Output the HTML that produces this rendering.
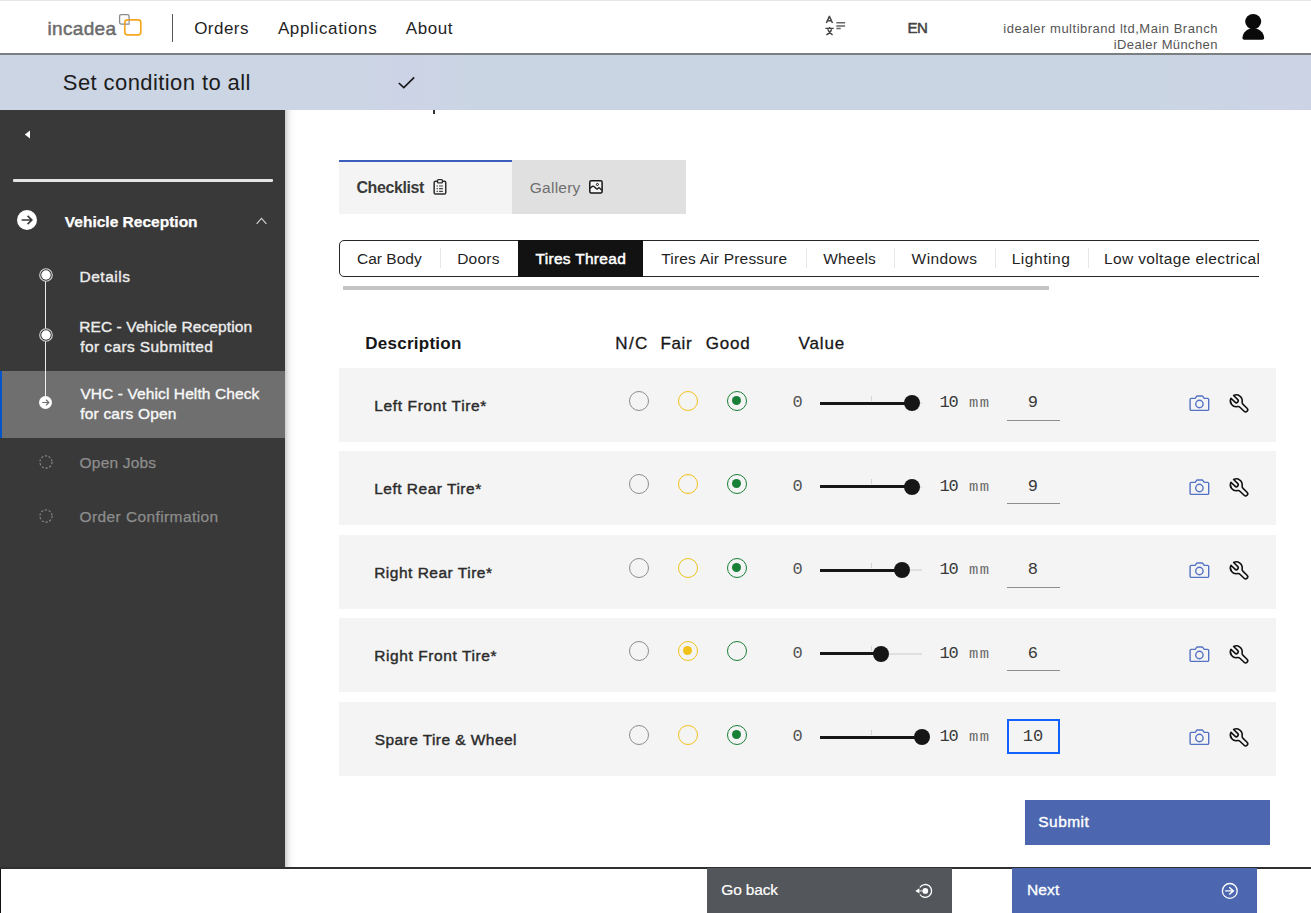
<!DOCTYPE html>
<html><head><meta charset="utf-8"><title>Vehicle Health Check</title>
<style>
*{box-sizing:border-box;margin:0;padding:0}
html,body{width:1311px;height:913px;overflow:hidden;background:#fff}
body{font-family:"Liberation Sans",sans-serif;color:#161616;position:relative}
.a{position:absolute}
.t{position:absolute;white-space:nowrap}
svg{position:absolute;overflow:visible}
.row{position:absolute;left:339px;width:937px;background:#f4f4f4}
.rad{position:absolute;width:20px;height:20px;border-radius:50%;border:1.3px solid #8d8d8d}
.rad i{position:absolute;left:4.2px;top:4.2px;width:9px;height:9px;border-radius:50%}
</style></head><body>
<div class="a" style="left:0;top:0;width:1311px;height:55px;background:#fff;border-top:1px solid #e6e6e6;border-bottom:2px solid #7b7f80"></div>
<div class="t" style="left:47.40px;top:18.90px;font-size:19px;line-height:20px;font-weight:400;color:#6c6c6c;letter-spacing:0.354px;font-family:'Liberation Sans',sans-serif;-webkit-text-stroke:0.5px #6c6c6c;">incadea</div>
<svg style="left:118px;top:13px" width="26" height="26" viewBox="0 0 26 26" fill="none"><rect x="1.6" y="1.6" width="9.5" height="9.5" rx="1.6" stroke="#8a8a8a" stroke-width="1.3"/><rect x="6.8" y="6.8" width="16" height="15" rx="2.6" fill="#fff" stroke="#f6a823" stroke-width="1.7"/><path d="M6.8 11.1 H11.1 V6.8" stroke="#8a8a8a" stroke-width="1.1"/></svg>
<div class="a" style="left:171.5px;top:14px;width:1.5px;height:28px;background:#555"></div>
<div class="t" style="left:194.15px;top:19.21px;font-size:17px;line-height:20px;font-weight:400;color:#1f1f1f;letter-spacing:0.475px;font-family:'Liberation Sans',sans-serif;">Orders</div>
<div class="t" style="left:277.90px;top:19.21px;font-size:17px;line-height:20px;font-weight:400;color:#1f1f1f;letter-spacing:0.645px;font-family:'Liberation Sans',sans-serif;">Applications</div>
<div class="t" style="left:405.80px;top:19.21px;font-size:17px;line-height:20px;font-weight:400;color:#1f1f1f;letter-spacing:0.556px;font-family:'Liberation Sans',sans-serif;">About</div>
<svg style="left:820px;top:10px" width="32" height="30" viewBox="0 0 32 30" fill="none" stroke="#454545" stroke-width="1.5" stroke-linejoin="round"><path d="M6.3 13 L9.4 6.4 L12.5 13 M7.5 10.8 H11.3"/><path d="M5.4 18.4 H13.7 M9.5 16.9 V18.4 M7.7 19.2 C8.6 22 10.4 23.8 12.6 24.9 M11.6 19.2 C10.7 22 8.8 23.8 6.4 24.9" stroke-width="1.4"/><path d="M16.3 12.65 H25.1 M16.3 15.9 H25.1 M16.4 18.6 H20.7" stroke-width="1.5" stroke="#666"/></svg>
<div class="t" style="left:907.40px;top:18.01px;font-size:15px;line-height:20px;font-weight:400;color:#444;letter-spacing:-0.275px;font-family:'Liberation Sans',sans-serif;-webkit-text-stroke:0.5px #444;">EN</div>
<div class="t" style="left:1003.33px;top:18.90px;font-size:13px;line-height:20px;font-weight:400;color:#555;letter-spacing:0.509px;font-family:'Liberation Sans',sans-serif;">idealer multibrand ltd,Main Branch</div>
<div class="t" style="left:1113.83px;top:34.50px;font-size:13px;line-height:20px;font-weight:400;color:#555;letter-spacing:0.379px;font-family:'Liberation Sans',sans-serif;">iDealer München</div>
<svg style="left:1241px;top:12px" width="26" height="30" viewBox="0 0 26 30"><ellipse cx="12.2" cy="9.6" rx="8" ry="7.7" fill="#0a0a0a"/><path d="M3.4 27.8 C2 27.8 1.4 27 1.5 25.6 C2 20 6.4 16.6 12.2 16.6 C18.2 16.6 22.6 20 23.1 25.6 C23.2 27 22.6 27.8 21.2 27.8 Z" fill="#0a0a0a"/></svg>
<div class="a" style="left:0;top:55px;width:1311px;height:55px;background:linear-gradient(to right,#cbd5e4 0,#cbd5e4 28%,#cdd3e6 31%,#cad5e3 36%,#cad5e3 88%,#ccd3e5 100%)"></div>
<div class="t" style="left:62.80px;top:72.70px;font-size:22px;line-height:20px;font-weight:400;color:#1c1c1c;letter-spacing:0.412px;font-family:'Liberation Sans',sans-serif;">Set condition to all</div>
<svg style="left:397px;top:75px" width="20" height="16" viewBox="0 0 20 16" fill="none" stroke="#161616" stroke-width="1.6"><path d="M1.8 8 L6.8 12.6 L17.2 2.4"/></svg>
<div class="a" style="left:0;top:110px;width:285px;height:758px;background:#393939"></div>
<div class="a" style="left:285px;top:110px;width:11px;height:758px;background:linear-gradient(to right,rgba(0,0,0,.2),rgba(0,0,0,.08) 30%,rgba(0,0,0,.02) 60%,rgba(0,0,0,0))"></div>
<div class="a" style="left:433px;top:110px;width:1.5px;height:3.5px;background:#333"></div>
<svg style="left:24px;top:130px" width="8" height="10" viewBox="0 0 8 10"><path d="M6 0.6 V8.6 L0.8 4.6 Z" fill="#fff"/></svg>
<div class="a" style="left:13px;top:179.3px;width:259.5px;height:2.4px;background:#e4e4e4;border-radius:1px"></div>
<svg style="left:16.7px;top:210.3px" width="20" height="20" viewBox="0 0 20 20"><circle cx="10" cy="10" r="10" fill="#fff"/><path d="M4.6 10 H14.6 M10.6 5.8 L14.8 10 L10.6 14.2" fill="none" stroke="#393939" stroke-width="1.7"/></svg>
<div class="t" style="left:64.80px;top:212.00px;font-size:15.5px;line-height:20px;font-weight:700;color:#fff;letter-spacing:0.008px;font-family:'Liberation Sans',sans-serif;-webkit-text-stroke:0.25px #fff;">Vehicle Reception</div>
<svg style="left:256px;top:216.5px" width="11" height="8" viewBox="0 0 11 8" fill="none" stroke="#d0d0d0" stroke-width="1.2"><path d="M0.6 6.8 L5.5 1.4 L10.4 6.8"/></svg>
<div class="a" style="left:45.1px;top:275px;width:1.4px;height:127px;background:#e8e8e8"></div>
<svg style="left:38.8px;top:267.8px" width="14" height="14" viewBox="0 0 14 14"><circle cx="7" cy="7" r="6.3" fill="#393939" stroke="#d6d6d6" stroke-width="1.1"/><circle cx="7" cy="7" r="4.7" fill="#fff"/></svg>
<div class="t" style="left:79.44px;top:266.91px;font-size:15.5px;line-height:20px;font-weight:400;color:#ececec;letter-spacing:0.532px;font-family:'Liberation Sans',sans-serif;-webkit-text-stroke:0.38px #ececec;">Details</div>
<svg style="left:38.8px;top:328px" width="14" height="14" viewBox="0 0 14 14"><circle cx="7" cy="7" r="6.3" fill="#393939" stroke="#d6d6d6" stroke-width="1.1"/><circle cx="7" cy="7" r="4.7" fill="#fff"/></svg>
<div class="t" style="left:79.14px;top:317.00px;font-size:15.5px;line-height:20px;font-weight:400;color:#ececec;letter-spacing:0.111px;font-family:'Liberation Sans',sans-serif;-webkit-text-stroke:0.38px #ececec;">REC - Vehicle Reception</div>
<div class="t" style="left:80.27px;top:336.81px;font-size:15.5px;line-height:20px;font-weight:400;color:#ececec;letter-spacing:0.400px;font-family:'Liberation Sans',sans-serif;-webkit-text-stroke:0.38px #ececec;">for cars Submitted</div>
<div class="a" style="left:0;top:371px;width:285px;height:66.5px;background:#6f6f6f"></div>
<div class="a" style="left:0;top:371px;width:2.2px;height:66.5px;background:#0353c9"></div>
<div class="a" style="left:45.1px;top:371px;width:1.4px;height:25px;background:#f0f0f0"></div>
<svg style="left:39.2px;top:395.5px" width="13" height="13" viewBox="0 0 13 13"><circle cx="6.5" cy="6.5" r="6.5" fill="#fff"/><path d="M3.2 6.5 H9.6 M7 3.8 L9.8 6.5 L7 9.2" fill="none" stroke="#6f6f6f" stroke-width="1.2"/></svg>
<div class="t" style="left:80.39px;top:383.91px;font-size:15.5px;line-height:20px;font-weight:400;color:#f8f8f8;letter-spacing:0.100px;font-family:'Liberation Sans',sans-serif;-webkit-text-stroke:0.38px #f8f8f8;">VHC - Vehicl Helth Check</div>
<div class="t" style="left:80.27px;top:403.61px;font-size:15.5px;line-height:20px;font-weight:400;color:#f8f8f8;letter-spacing:0.189px;font-family:'Liberation Sans',sans-serif;-webkit-text-stroke:0.38px #f8f8f8;">for cars Open</div>
<svg style="left:38.8px;top:455.2px" width="14" height="14" viewBox="0 0 14 14"><circle cx="7" cy="7" r="6.1" fill="none" stroke="#8a8a8a" stroke-width="1.1" stroke-dasharray="2.2 1.63"/></svg>
<div class="t" style="left:79.58px;top:453.31px;font-size:15.5px;line-height:20px;font-weight:400;color:#8d8d8d;letter-spacing:0.187px;font-family:'Liberation Sans',sans-serif;-webkit-text-stroke:0.25px #8d8d8d;">Open Jobs</div>
<svg style="left:38.8px;top:508.6px" width="14" height="14" viewBox="0 0 14 14"><circle cx="7" cy="7" r="6.1" fill="none" stroke="#8a8a8a" stroke-width="1.1" stroke-dasharray="2.2 1.63"/></svg>
<div class="t" style="left:79.58px;top:507.20px;font-size:15.5px;line-height:20px;font-weight:400;color:#8d8d8d;letter-spacing:0.397px;font-family:'Liberation Sans',sans-serif;-webkit-text-stroke:0.25px #8d8d8d;">Order Confirmation</div>
<div class="a" style="left:339px;top:160px;width:173px;height:53.5px;background:#f4f4f4;border-top:2px solid #3d5dbd"></div>
<div class="a" style="left:512px;top:160px;width:174px;height:53.5px;background:#e0e0e0"></div>
<div class="t" style="left:356.38px;top:177.70px;font-size:16px;line-height:20px;font-weight:700;color:#3a3a3a;letter-spacing:-0.384px;font-family:'Liberation Sans',sans-serif;">Checklist</div>
<svg style="left:426px;top:172px" width="30" height="30" viewBox="0 0 30 30" fill="none" stroke="#2e2e2e" stroke-width="1.5"><rect x="8.15" y="9.2" width="11.6" height="12.85" rx="1.4"/><rect x="11.5" y="7.6" width="4.9" height="3.3" rx="0.9" fill="#fafafa" stroke-width="1.4"/><path d="M10.6 14 H11.9 M13.1 14 H16.9 M10.6 16.6 H11.9 M13.1 16.6 H16.9 M10.6 19.4 H11.9 M13.1 19.4 H16.9" stroke-width="1.2" stroke="#444"/></svg>
<div class="t" style="left:529.85px;top:177.91px;font-size:15.5px;line-height:20px;font-weight:400;color:#6f6f6f;letter-spacing:0.221px;font-family:'Liberation Sans',sans-serif;">Gallery</div>
<svg style="left:581px;top:172px" width="30" height="30" viewBox="0 0 30 30" fill="none" stroke="#161616" stroke-width="1.5" stroke-linejoin="round"><rect x="8.8" y="8.65" width="12.3" height="12.45" rx="1.5" fill="#f4f4f4"/><circle cx="16.4" cy="12.5" r="1.05" stroke-width="1"/><path d="M8.9 16.2 L11.4 14.4 Q12.2 13.8 13 14.5 L15.4 16.8 Q16 17.3 16.6 16.7 L17.5 15.9 Q18 15.5 18.5 16 L20.9 18.4" stroke-width="1.3"/></svg>
<div class="a" style="left:339px;top:240px;width:920.2px;height:37px;overflow:hidden"><div class="a" style="left:0;top:0;width:960px;height:37px;border:1.3px solid #262626;border-radius:5px;background:#fff"></div></div>
<div class="a" style="left:518px;top:240px;width:124.5px;height:37px;background:#121212"></div>
<div class="a" style="left:440px;top:248px;width:1px;height:20px;background:#e6e6e6"></div>
<div class="a" style="left:806px;top:248px;width:1px;height:20px;background:#e6e6e6"></div>
<div class="a" style="left:894px;top:248px;width:1px;height:20px;background:#e6e6e6"></div>
<div class="a" style="left:995px;top:248px;width:1px;height:20px;background:#e6e6e6"></div>
<div class="a" style="left:1087.5px;top:248px;width:1px;height:20px;background:#e6e6e6"></div>
<div class="t" style="left:356.95px;top:249.20px;font-size:15.5px;line-height:20px;font-weight:400;color:#1f1f1f;letter-spacing:0.032px;font-family:'Liberation Sans',sans-serif;">Car Body</div>
<div class="t" style="left:457.15px;top:249.20px;font-size:15.5px;line-height:20px;font-weight:400;color:#1f1f1f;letter-spacing:0.244px;font-family:'Liberation Sans',sans-serif;">Doors</div>
<div class="t" style="left:535.58px;top:249.20px;font-size:15.5px;line-height:20px;font-weight:400;color:#fff;letter-spacing:0.289px;font-family:'Liberation Sans',sans-serif;-webkit-text-stroke:0.5px #fff;">Tires Thread</div>
<div class="t" style="left:661.23px;top:249.20px;font-size:15.5px;line-height:20px;font-weight:400;color:#1f1f1f;letter-spacing:0.193px;font-family:'Liberation Sans',sans-serif;">Tires Air Pressure</div>
<div class="t" style="left:823.30px;top:249.20px;font-size:15.5px;line-height:20px;font-weight:400;color:#1f1f1f;letter-spacing:0.155px;font-family:'Liberation Sans',sans-serif;">Wheels</div>
<div class="t" style="left:911.60px;top:249.20px;font-size:15.5px;line-height:20px;font-weight:400;color:#1f1f1f;letter-spacing:0.404px;font-family:'Liberation Sans',sans-serif;">Windows</div>
<div class="t" style="left:1011.65px;top:249.20px;font-size:15.5px;line-height:20px;font-weight:400;color:#1f1f1f;letter-spacing:0.557px;font-family:'Liberation Sans',sans-serif;">Lighting</div>
<div class="t" style="left:1103.95px;top:249.20px;font-size:15.5px;line-height:20px;font-weight:400;color:#1f1f1f;letter-spacing:0.376px;font-family:'Liberation Sans',sans-serif;">Low voltage electrical</div>
<div class="a" style="left:1259.2px;top:238px;width:52px;height:42px;background:#fff"></div>
<div class="a" style="left:343px;top:286.2px;width:705.5px;height:3.6px;background:#c4c4c4"></div>
<div class="t" style="left:365.18px;top:333.61px;font-size:17px;line-height:20px;font-weight:700;color:#161616;letter-spacing:0.272px;font-family:'Liberation Sans',sans-serif;">Description</div>
<div class="t" style="left:615.27px;top:333.61px;font-size:17px;line-height:20px;font-weight:400;color:#161616;letter-spacing:1.425px;font-family:'Liberation Sans',sans-serif;-webkit-text-stroke:0.3px #161616;">N/C</div>
<div class="t" style="left:660.57px;top:333.61px;font-size:17px;line-height:20px;font-weight:400;color:#161616;letter-spacing:0.592px;font-family:'Liberation Sans',sans-serif;-webkit-text-stroke:0.3px #161616;">Fair</div>
<div class="t" style="left:705.67px;top:333.61px;font-size:17px;line-height:20px;font-weight:400;color:#161616;letter-spacing:0.792px;font-family:'Liberation Sans',sans-serif;-webkit-text-stroke:0.3px #161616;">Good</div>
<div class="t" style="left:798.62px;top:333.61px;font-size:17px;line-height:20px;font-weight:400;color:#161616;letter-spacing:0.856px;font-family:'Liberation Sans',sans-serif;-webkit-text-stroke:0.3px #161616;">Value</div>
<div class="row" style="top:367.5px;height:74.2px"></div>
<div class="t" style="left:374.15px;top:395.50px;font-size:15.5px;line-height:20px;font-weight:400;color:#2b2b2b;letter-spacing:0.647px;font-family:'Liberation Sans',sans-serif;-webkit-text-stroke:0.4px #2b2b2b;">Left Front Tire*</div>
<div class="rad" style="left:629.1px;top:390.8px;border-color:#8d8d8d"></div>
<div class="rad" style="left:678.1px;top:390.8px;border-color:#f1c21b"></div>
<div class="rad" style="left:727.3px;top:390.8px;border-color:#198038"><i style="background:#198038"></i></div>
<div class="t" style="left:792.40px;top:393.41px;font-size:17px;line-height:20px;font-weight:400;color:#525252;letter-spacing:0.000px;font-family:'Liberation Mono',monospace;">0</div>
<div class="a" style="left:820px;top:402.2px;width:102px;height:2px;background:#e0e0e0"></div>
<div class="a" style="left:871px;top:395.7px;width:1px;height:5px;background:#d4d4d4"></div>
<div class="a" style="left:820px;top:401.8px;width:91.79999999999995px;height:2.8px;background:#161616"></div>
<div class="a" style="left:903.8px;top:395.2px;width:16px;height:16px;border-radius:50%;background:#161616"></div>
<div class="t" style="left:939.45px;top:393.41px;font-size:17px;line-height:20px;font-weight:400;color:#393939;letter-spacing:-1.050px;font-family:'Liberation Mono',monospace;">10</div>
<div class="t" style="left:969.05px;top:393.40px;font-size:15.5px;line-height:20px;font-weight:400;color:#6a6a6a;letter-spacing:1.300px;font-family:'Liberation Mono',monospace;">mm</div>
<div class="a" style="left:1007px;top:419.5px;width:53px;height:1px;background:#8d8d8d"></div>
<div class="t" style="left:1027.83px;top:393.41px;font-size:17px;line-height:20px;font-weight:400;color:#393939;letter-spacing:0.000px;font-family:'Liberation Mono',monospace;">9</div>
<svg style="left:1184px;top:390.0px" width="30" height="26" viewBox="0 0 30 26" fill="none" stroke="#5573c4" stroke-width="1.4"><path d="M7.3 8.4 H11.2 L12.4 6.6 Q12.7 6 13.4 6 H18 Q18.7 6 19 6.6 L20.2 8.4 H23.5 Q24.7 8.4 24.7 9.6 V19.2 Q24.7 20.4 23.5 20.4 H7.3 Q6.1 20.4 6.1 19.2 V9.6 Q6.1 8.4 7.3 8.4 Z" stroke-linejoin="round"/><circle cx="15.4" cy="14" r="3.7"/></svg>
<svg style="left:1224px;top:390.0px" width="30" height="26" viewBox="0 0 30 26" fill="none" stroke="#111" stroke-width="1.6" stroke-linejoin="round"><g transform="translate(12.3 10.8) rotate(44)"><path d="M-5.6 -1.9 A5.9 5.9 0 0 1 4.9 -3.3 Q5.8 -2.1 7.4 -2.1 L12.9 -2.1 A2.1 2.1 0 0 1 12.9 2.1 L7.4 2.1 Q5.8 2.1 4.9 3.3 A5.9 5.9 0 0 1 -5.6 1.9 L0 1.9 A1.9 1.9 0 0 0 0 -1.9 Z"/></g></svg>
<div class="row" style="top:451.0px;height:74.2px"></div>
<div class="t" style="left:374.15px;top:479.00px;font-size:15.5px;line-height:20px;font-weight:400;color:#2b2b2b;letter-spacing:0.509px;font-family:'Liberation Sans',sans-serif;-webkit-text-stroke:0.4px #2b2b2b;">Left Rear Tire*</div>
<div class="rad" style="left:629.1px;top:474.3px;border-color:#8d8d8d"></div>
<div class="rad" style="left:678.1px;top:474.3px;border-color:#f1c21b"></div>
<div class="rad" style="left:727.3px;top:474.3px;border-color:#198038"><i style="background:#198038"></i></div>
<div class="t" style="left:792.40px;top:476.91px;font-size:17px;line-height:20px;font-weight:400;color:#525252;letter-spacing:0.000px;font-family:'Liberation Mono',monospace;">0</div>
<div class="a" style="left:820px;top:485.7px;width:102px;height:2px;background:#e0e0e0"></div>
<div class="a" style="left:871px;top:479.2px;width:1px;height:5px;background:#d4d4d4"></div>
<div class="a" style="left:820px;top:485.3px;width:91.79999999999995px;height:2.8px;background:#161616"></div>
<div class="a" style="left:903.8px;top:478.7px;width:16px;height:16px;border-radius:50%;background:#161616"></div>
<div class="t" style="left:939.45px;top:476.91px;font-size:17px;line-height:20px;font-weight:400;color:#393939;letter-spacing:-1.050px;font-family:'Liberation Mono',monospace;">10</div>
<div class="t" style="left:969.05px;top:476.90px;font-size:15.5px;line-height:20px;font-weight:400;color:#6a6a6a;letter-spacing:1.300px;font-family:'Liberation Mono',monospace;">mm</div>
<div class="a" style="left:1007px;top:503.0px;width:53px;height:1px;background:#8d8d8d"></div>
<div class="t" style="left:1027.83px;top:476.91px;font-size:17px;line-height:20px;font-weight:400;color:#393939;letter-spacing:0.000px;font-family:'Liberation Mono',monospace;">9</div>
<svg style="left:1184px;top:473.5px" width="30" height="26" viewBox="0 0 30 26" fill="none" stroke="#5573c4" stroke-width="1.4"><path d="M7.3 8.4 H11.2 L12.4 6.6 Q12.7 6 13.4 6 H18 Q18.7 6 19 6.6 L20.2 8.4 H23.5 Q24.7 8.4 24.7 9.6 V19.2 Q24.7 20.4 23.5 20.4 H7.3 Q6.1 20.4 6.1 19.2 V9.6 Q6.1 8.4 7.3 8.4 Z" stroke-linejoin="round"/><circle cx="15.4" cy="14" r="3.7"/></svg>
<svg style="left:1224px;top:473.5px" width="30" height="26" viewBox="0 0 30 26" fill="none" stroke="#111" stroke-width="1.6" stroke-linejoin="round"><g transform="translate(12.3 10.8) rotate(44)"><path d="M-5.6 -1.9 A5.9 5.9 0 0 1 4.9 -3.3 Q5.8 -2.1 7.4 -2.1 L12.9 -2.1 A2.1 2.1 0 0 1 12.9 2.1 L7.4 2.1 Q5.8 2.1 4.9 3.3 A5.9 5.9 0 0 1 -5.6 1.9 L0 1.9 A1.9 1.9 0 0 0 0 -1.9 Z"/></g></svg>
<div class="row" style="top:534.5px;height:74.2px"></div>
<div class="t" style="left:374.15px;top:562.50px;font-size:15.5px;line-height:20px;font-weight:400;color:#2b2b2b;letter-spacing:0.503px;font-family:'Liberation Sans',sans-serif;-webkit-text-stroke:0.4px #2b2b2b;">Right Rear Tire*</div>
<div class="rad" style="left:629.1px;top:557.8px;border-color:#8d8d8d"></div>
<div class="rad" style="left:678.1px;top:557.8px;border-color:#f1c21b"></div>
<div class="rad" style="left:727.3px;top:557.8px;border-color:#198038"><i style="background:#198038"></i></div>
<div class="t" style="left:792.40px;top:560.41px;font-size:17px;line-height:20px;font-weight:400;color:#525252;letter-spacing:0.000px;font-family:'Liberation Mono',monospace;">0</div>
<div class="a" style="left:820px;top:569.2px;width:102px;height:2px;background:#e0e0e0"></div>
<div class="a" style="left:871px;top:562.7px;width:1px;height:5px;background:#d4d4d4"></div>
<div class="a" style="left:820px;top:568.8000000000001px;width:81.60000000000002px;height:2.8px;background:#161616"></div>
<div class="a" style="left:893.6px;top:562.2px;width:16px;height:16px;border-radius:50%;background:#161616"></div>
<div class="t" style="left:939.45px;top:560.41px;font-size:17px;line-height:20px;font-weight:400;color:#393939;letter-spacing:-1.050px;font-family:'Liberation Mono',monospace;">10</div>
<div class="t" style="left:969.05px;top:560.40px;font-size:15.5px;line-height:20px;font-weight:400;color:#6a6a6a;letter-spacing:1.300px;font-family:'Liberation Mono',monospace;">mm</div>
<div class="a" style="left:1007px;top:586.5px;width:53px;height:1px;background:#8d8d8d"></div>
<div class="t" style="left:1027.83px;top:560.41px;font-size:17px;line-height:20px;font-weight:400;color:#393939;letter-spacing:0.000px;font-family:'Liberation Mono',monospace;">8</div>
<svg style="left:1184px;top:557.0px" width="30" height="26" viewBox="0 0 30 26" fill="none" stroke="#5573c4" stroke-width="1.4"><path d="M7.3 8.4 H11.2 L12.4 6.6 Q12.7 6 13.4 6 H18 Q18.7 6 19 6.6 L20.2 8.4 H23.5 Q24.7 8.4 24.7 9.6 V19.2 Q24.7 20.4 23.5 20.4 H7.3 Q6.1 20.4 6.1 19.2 V9.6 Q6.1 8.4 7.3 8.4 Z" stroke-linejoin="round"/><circle cx="15.4" cy="14" r="3.7"/></svg>
<svg style="left:1224px;top:557.0px" width="30" height="26" viewBox="0 0 30 26" fill="none" stroke="#111" stroke-width="1.6" stroke-linejoin="round"><g transform="translate(12.3 10.8) rotate(44)"><path d="M-5.6 -1.9 A5.9 5.9 0 0 1 4.9 -3.3 Q5.8 -2.1 7.4 -2.1 L12.9 -2.1 A2.1 2.1 0 0 1 12.9 2.1 L7.4 2.1 Q5.8 2.1 4.9 3.3 A5.9 5.9 0 0 1 -5.6 1.9 L0 1.9 A1.9 1.9 0 0 0 0 -1.9 Z"/></g></svg>
<div class="row" style="top:618.0px;height:74.2px"></div>
<div class="t" style="left:374.15px;top:646.00px;font-size:15.5px;line-height:20px;font-weight:400;color:#2b2b2b;letter-spacing:0.595px;font-family:'Liberation Sans',sans-serif;-webkit-text-stroke:0.4px #2b2b2b;">Right Front Tire*</div>
<div class="rad" style="left:629.1px;top:641.3px;border-color:#8d8d8d"></div>
<div class="rad" style="left:678.1px;top:641.3px;border-color:#f1c21b"><i style="background:#f1c21b"></i></div>
<div class="rad" style="left:727.3px;top:641.3px;border-color:#198038"></div>
<div class="t" style="left:792.40px;top:643.91px;font-size:17px;line-height:20px;font-weight:400;color:#525252;letter-spacing:0.000px;font-family:'Liberation Mono',monospace;">0</div>
<div class="a" style="left:820px;top:652.7px;width:102px;height:2px;background:#e0e0e0"></div>
<div class="a" style="left:871px;top:646.2px;width:1px;height:5px;background:#d4d4d4"></div>
<div class="a" style="left:820px;top:652.3000000000001px;width:61.200000000000045px;height:2.8px;background:#161616"></div>
<div class="a" style="left:873.2px;top:645.7px;width:16px;height:16px;border-radius:50%;background:#161616"></div>
<div class="t" style="left:939.45px;top:643.91px;font-size:17px;line-height:20px;font-weight:400;color:#393939;letter-spacing:-1.050px;font-family:'Liberation Mono',monospace;">10</div>
<div class="t" style="left:969.05px;top:643.90px;font-size:15.5px;line-height:20px;font-weight:400;color:#6a6a6a;letter-spacing:1.300px;font-family:'Liberation Mono',monospace;">mm</div>
<div class="a" style="left:1007px;top:670.0px;width:53px;height:1px;background:#8d8d8d"></div>
<div class="t" style="left:1027.70px;top:643.91px;font-size:17px;line-height:20px;font-weight:400;color:#393939;letter-spacing:0.000px;font-family:'Liberation Mono',monospace;">6</div>
<svg style="left:1184px;top:640.5px" width="30" height="26" viewBox="0 0 30 26" fill="none" stroke="#5573c4" stroke-width="1.4"><path d="M7.3 8.4 H11.2 L12.4 6.6 Q12.7 6 13.4 6 H18 Q18.7 6 19 6.6 L20.2 8.4 H23.5 Q24.7 8.4 24.7 9.6 V19.2 Q24.7 20.4 23.5 20.4 H7.3 Q6.1 20.4 6.1 19.2 V9.6 Q6.1 8.4 7.3 8.4 Z" stroke-linejoin="round"/><circle cx="15.4" cy="14" r="3.7"/></svg>
<svg style="left:1224px;top:640.5px" width="30" height="26" viewBox="0 0 30 26" fill="none" stroke="#111" stroke-width="1.6" stroke-linejoin="round"><g transform="translate(12.3 10.8) rotate(44)"><path d="M-5.6 -1.9 A5.9 5.9 0 0 1 4.9 -3.3 Q5.8 -2.1 7.4 -2.1 L12.9 -2.1 A2.1 2.1 0 0 1 12.9 2.1 L7.4 2.1 Q5.8 2.1 4.9 3.3 A5.9 5.9 0 0 1 -5.6 1.9 L0 1.9 A1.9 1.9 0 0 0 0 -1.9 Z"/></g></svg>
<div class="row" style="top:701.5px;height:74.2px"></div>
<div class="t" style="left:374.65px;top:729.50px;font-size:15.5px;line-height:20px;font-weight:400;color:#2b2b2b;letter-spacing:0.438px;font-family:'Liberation Sans',sans-serif;-webkit-text-stroke:0.4px #2b2b2b;">Spare Tire &amp; Wheel</div>
<div class="rad" style="left:629.1px;top:724.8px;border-color:#8d8d8d"></div>
<div class="rad" style="left:678.1px;top:724.8px;border-color:#f1c21b"></div>
<div class="rad" style="left:727.3px;top:724.8px;border-color:#198038"><i style="background:#198038"></i></div>
<div class="t" style="left:792.40px;top:727.41px;font-size:17px;line-height:20px;font-weight:400;color:#525252;letter-spacing:0.000px;font-family:'Liberation Mono',monospace;">0</div>
<div class="a" style="left:820px;top:736.2px;width:102px;height:2px;background:#e0e0e0"></div>
<div class="a" style="left:871px;top:729.7px;width:1px;height:5px;background:#d4d4d4"></div>
<div class="a" style="left:820px;top:735.8000000000001px;width:102.0px;height:2.8px;background:#161616"></div>
<div class="a" style="left:914.0px;top:729.2px;width:16px;height:16px;border-radius:50%;background:#161616"></div>
<div class="t" style="left:939.45px;top:727.41px;font-size:17px;line-height:20px;font-weight:400;color:#393939;letter-spacing:-1.050px;font-family:'Liberation Mono',monospace;">10</div>
<div class="t" style="left:969.05px;top:727.40px;font-size:15.5px;line-height:20px;font-weight:400;color:#6a6a6a;letter-spacing:1.300px;font-family:'Liberation Mono',monospace;">mm</div>
<div class="a" style="left:1007px;top:719.1px;width:53px;height:35px;border:2px solid #0f62fe"></div>
<div class="t" style="left:1022.80px;top:727.41px;font-size:17px;line-height:20px;font-weight:400;color:#393939;letter-spacing:0.050px;font-family:'Liberation Mono',monospace;">10</div>
<svg style="left:1184px;top:724.0px" width="30" height="26" viewBox="0 0 30 26" fill="none" stroke="#5573c4" stroke-width="1.4"><path d="M7.3 8.4 H11.2 L12.4 6.6 Q12.7 6 13.4 6 H18 Q18.7 6 19 6.6 L20.2 8.4 H23.5 Q24.7 8.4 24.7 9.6 V19.2 Q24.7 20.4 23.5 20.4 H7.3 Q6.1 20.4 6.1 19.2 V9.6 Q6.1 8.4 7.3 8.4 Z" stroke-linejoin="round"/><circle cx="15.4" cy="14" r="3.7"/></svg>
<svg style="left:1224px;top:724.0px" width="30" height="26" viewBox="0 0 30 26" fill="none" stroke="#111" stroke-width="1.6" stroke-linejoin="round"><g transform="translate(12.3 10.8) rotate(44)"><path d="M-5.6 -1.9 A5.9 5.9 0 0 1 4.9 -3.3 Q5.8 -2.1 7.4 -2.1 L12.9 -2.1 A2.1 2.1 0 0 1 12.9 2.1 L7.4 2.1 Q5.8 2.1 4.9 3.3 A5.9 5.9 0 0 1 -5.6 1.9 L0 1.9 A1.9 1.9 0 0 0 0 -1.9 Z"/></g></svg>
<div class="a" style="left:1025px;top:800.4px;width:244.5px;height:44.2px;background:#4c67b0"></div>
<div class="t" style="left:1038.34px;top:812.00px;font-size:15.5px;line-height:20px;font-weight:400;color:#fff;letter-spacing:0.449px;font-family:'Liberation Sans',sans-serif;-webkit-text-stroke:0.38px #fff;">Submit</div>
<div class="a" style="left:0;top:867px;width:1.2px;height:46px;background:#111"></div>
<div class="a" style="left:0;top:866.9px;width:285px;height:1.5px;background:#111"></div>
<div class="a" style="left:0;top:866.9px;width:1311px;height:1.9px;background:#303030"></div>
<div class="a" style="left:707px;top:868px;width:245px;height:45px;background:#53565a"></div>
<div class="t" style="left:721.35px;top:880.00px;font-size:15.5px;line-height:20px;font-weight:400;color:#fff;letter-spacing:-0.183px;font-family:'Liberation Sans',sans-serif;-webkit-text-stroke:0.2px #fff;">Go back</div>
<svg style="left:908px;top:876px" width="32" height="28" viewBox="0 0 32 28" fill="none" stroke="#fff" stroke-width="1.3"><path d="M11.9 11.3 A6.4 6.4 0 1 1 11.9 18.5"/><circle cx="17.3" cy="14.9" r="2.9" fill="#fff" stroke="none"/><path d="M7.3 14.9 L11.4 12.2 V17.6 Z" fill="#fff" stroke="none"/><path d="M11 14.9 H14.6" stroke="#d8d8d8" stroke-width="1.1"/></svg>
<div class="a" style="left:1012.3px;top:868px;width:245.2px;height:45px;background:#4c67b0"></div>
<div class="t" style="left:1027.01px;top:880.00px;font-size:15.5px;line-height:20px;font-weight:400;color:#fff;letter-spacing:0.152px;font-family:'Liberation Sans',sans-serif;-webkit-text-stroke:0.32px #fff;">Next</div>
<svg style="left:1214px;top:876px" width="32" height="28" viewBox="0 0 32 28" fill="none" stroke="#fff" stroke-width="1.3"><circle cx="15.8" cy="14.9" r="7.4"/><path d="M11.2 14.9 H19 M15.2 11.3 L19.4 14.9 L15.2 18.5" stroke-width="1.4"/></svg>
</body></html>
